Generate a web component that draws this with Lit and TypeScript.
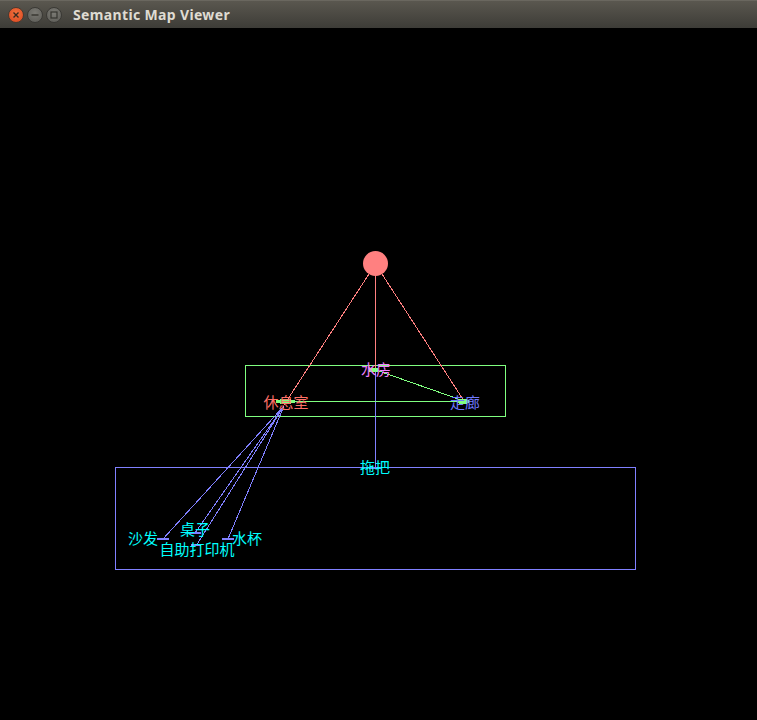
import { LitElement, html, svg, css } from "lit";
import { customElement } from "lit/decorators.js";

const PINK = "#ff8080", GREEN = "#80ff80", BLUE = "#8080ff", CYAN = "#00ffff";
type L = [number, number, number, number, string];
const lines: L[] = [
  [375.5, 264, 284, 405, PINK],
  [375.5, 264, 464, 401, PINK],
  [375.5, 264, 375.5, 369, PINK],
  [375.5, 369, 375.5, 468, BLUE],
  [284, 401.5, 462, 401.5, GREEN],
  [376, 370, 464, 401, GREEN],
  [284, 406, 163, 539, BLUE],
  [284, 406, 195, 533, BLUE],
  [284, 406, 196, 546, BLUE],
  [284, 406, 228, 539, BLUE],
];
const stubs: L[] = [
  [157, 539, 169, 539, BLUE],
  [222, 539, 234, 539, BLUE],
  [189, 533, 201, 533, BLUE],
  [191, 545, 201, 545, BLUE],
  [369, 468, 381, 468, BLUE],
];
const heads: [number, number, number, string][] = [
  [285.5, 401.5, 10, GREEN],
  [373.5, 370, 5, GREEN],
  [463, 401.5, 7, GREEN],
];
const labels: [string, number, number, string][] = [
  ["休息室", 286, 401, "#ff7068"],
  ["水房", 376, 368, "#f080ff"],
  ["走廊", 465, 401, "#7078ff"],
  ["拖把", 375, 466, CYAN],
  ["沙发", 143, 537, CYAN],
  ["桌子", 195, 528, CYAN],
  ["自助打印机", 197, 548, CYAN],
  ["水杯", 247, 537, CYAN],
];

@customElement("app-root")
export class AppRoot extends LitElement {
  static styles = css`
    :host { display: block; width: 757px; height: 720px; background: #000; overflow: hidden; }
    .window { display: flex; flex-direction: column; height: 720px; }
    .bar {
      height: 28px; flex: none; display: flex; align-items: center; box-sizing: border-box;
      padding: 0 0 0 8px; gap: 3px;
      background: linear-gradient(#5a574f, #3d3c37);
      border-top: 1px solid #6a675f;
    }
    .btn {
      width: 16px; height: 16px; border-radius: 50%; display: flex; align-items: center; justify-content: center;
      background: radial-gradient(circle at 50% 35%, #7b7a74, #5a5954); border: 1px solid #3a3935; box-sizing: border-box;
    }
    .close { background: radial-gradient(circle at 50% 40%, #f4743f, #d9441e); border-color: #4a3a30; }
    .btn svg { width: 8px; height: 8px; display: block; }
    .title {
      margin-left: 8px; color: #dfdbd2; font: bold 14px "Noto Sans", "Open Sans", sans-serif; letter-spacing: 0.35px;
    }
    .canvas { flex: 1; display: block; background: #000; width: 757px; }
    .thin { shape-rendering: crispEdges; fill: none; stroke-width: 1; }
    .line { fill: none; stroke-width: 1; shape-rendering: crispEdges; }
    .stub { stroke-width: 2; shape-rendering: crispEdges; }
    .head { shape-rendering: crispEdges; }
    .label { font: 15px "Noto Sans CJK SC", sans-serif; text-anchor: middle; dominant-baseline: central; }
  `;

  render() {
    return html`<div class="window">
      <div class="bar">
        <span class="btn close"><svg viewBox="0 0 8 8"><path d="M1.5 1.5L6.5 6.5M6.5 1.5L1.5 6.5" stroke="#3a2a20" stroke-width="1.4"/></svg></span>
        <span class="btn"><svg viewBox="0 0 8 8"><path d="M0.5 4H7.5" stroke="#35342f" stroke-width="1.4"/></svg></span>
        <span class="btn"><svg viewBox="0 0 8 8"><rect x="1" y="1" width="6" height="6" fill="none" stroke="#35342f" stroke-width="1.2"/></svg></span>
        <span class="title">Semantic Map Viewer</span>
      </div>
      <svg class="canvas" viewBox="0 28 757 692" width="757" height="692">
        <rect class="thin" x="115.5" y="467.5" width="520" height="102" stroke="${BLUE}" />
        <rect class="thin" x="245.5" y="365.5" width="260" height="51" stroke="${GREEN}" />
        <circle cx="375.5" cy="263.5" r="12.5" fill="${PINK}" />
        ${lines.map(([a, b, c, d, s]) => svg`<line class="line" x1=${a} y1=${b} x2=${c} y2=${d} stroke=${s} />`)}
        ${stubs.map(([a, b, c, d, s]) => svg`<line class="stub" x1=${a} y1=${b} x2=${c} y2=${d} stroke=${s} />`)}
        ${heads.map(([x, y, w, s]) => svg`<ellipse class="head" cx=${x} cy=${y} rx=${w} ry="2.5" fill=${s} />`)}
        ${labels.map(([t, x, y, c]) => svg`<text class="label" x=${x} y=${y} fill=${c}>${t}</text>`)}
      </svg>
    </div>`;
  }
}
